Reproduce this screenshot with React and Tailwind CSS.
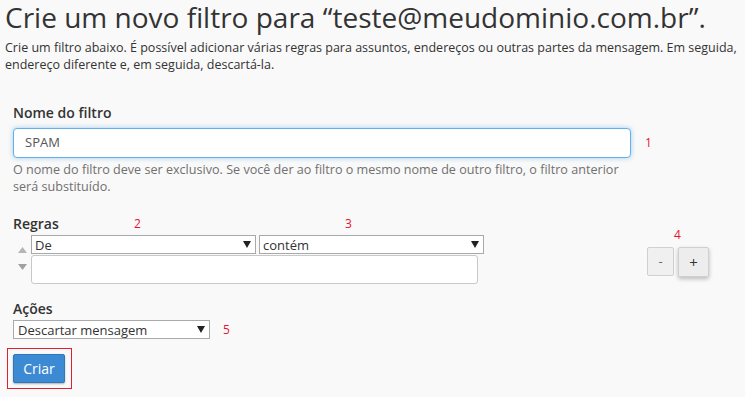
import React from 'react';

const Num = ({ children, className = '' }) => (
    <span className={`text-[12px] leading-none text-[#e8112d] ${className}`}>{children}</span>
);

const Select = ({ value, className = '' }) => (
    <div className={`flex items-center justify-between h-[19px] bg-white border border-[#a9a9a9] pl-[3px] pr-[4px] text-[13px] leading-[16px] text-[#333] ${className}`}>
        <span>{value}</span>
        <svg width="8" height="7" viewBox="0 0 8 7"><path d="M0 0 L8 0 L4 7 Z" fill="#222" /></svg>
    </div>
);

const App = () => {
    return (
        <div className="min-h-screen w-full overflow-hidden bg-[#f9f9f9] text-[#333] font-['Open_Sans',sans-serif]">
            <h1 className="pl-[5px] pt-[1px] text-[28px] leading-[32px] whitespace-nowrap">
                Crie um novo filtro para “teste@meudominio.com.br”.
            </h1>
            <div className="mt-[6px] pl-[5px] text-[12.5px] leading-[17px] whitespace-nowrap">
                <div>Crie um filtro abaixo. É possível adicionar várias regras para assuntos, endereços ou outras partes da mensagem. Em seguida,</div>
                <div>endereço diferente e, em seguida, descartá-la.</div>
            </div>

            <form className="pl-[13px] mt-[30px]" onSubmit={(e) => e.preventDefault()}>
                <div className="text-[14px] leading-[20px] font-semibold">Nome do filtro</div>
                <div className="mt-[5px] flex items-center">
                    <div className="w-[618px] h-[30px] flex items-center bg-white border border-[#66afe9] rounded-[4px] shadow-[0_0_5px_rgba(102,175,233,0.6)] px-[11px] text-[13px] text-[#555]">
                        SPAM
                    </div>
                    <Num className="ml-[14px]">1</Num>
                </div>
                <p className="w-[620px] mt-[3px] text-[12.6px] leading-[17px] text-[#707070]">
                    O nome do filtro deve ser exclusivo. Se você der ao filtro o mesmo nome de outro filtro, o filtro anterior será substituído.
                </p>

                <div className="mt-[19px] flex items-start">
                    <div>
                        <div className="flex items-end h-[20px]">
                            <span className="w-[121px] text-[14px] leading-[20px] font-semibold">Regras</span>
                            <Num className="w-[211px] pb-[4px]">2</Num>
                            <Num className="pb-[4px]">3</Num>
                        </div>
                        <div className="mt-[1px] flex">
                            <div className="w-[18px] flex flex-col items-center pt-[12px] gap-[11px]">
                                <svg width="9" height="6" viewBox="0 0 9 6"><path d="M4.5 0 L9 6 L0 6 Z" fill="#b5b5b5" /></svg>
                                <svg width="9" height="6" viewBox="0 0 9 6"><path d="M0 0 L9 0 L4.5 6 Z" fill="#a0a0a0" /></svg>
                            </div>
                            <div>
                                <div className="flex gap-[3px]">
                                    <Select value="De" className="w-[225px]" />
                                    <Select value="contém" className="w-[225px]" />
                                </div>
                                <div className="mt-[1px] w-[447px] h-[29px] bg-white border border-[#c8c8c8] rounded-[3px]" />
                            </div>
                        </div>
                    </div>
                    <div className="ml-[163px] pt-[15px] flex flex-col">
                        <Num className="self-start ml-[27px] h-[10px]">4</Num>
                        <div className="mt-[8px] flex items-start gap-[4px]">
                            <button type="button" className="w-[27px] h-[29px] bg-[#f0f0f0] border border-[#d0d0d0] rounded-[2px] text-[13px] text-[#666] leading-none">-</button>
                            <button type="button" className="w-[31px] h-[30px] bg-[#ededed] border border-[#d0d0d0] rounded-[2px] text-[15px] text-[#333] leading-none shadow-[0_2px_4px_rgba(0,0,0,0.25)]">+</button>
                        </div>
                    </div>
                </div>

                <div className="mt-[15px] text-[14px] leading-[20px] font-semibold">Ações</div>
                <div className="mt-[1px] flex items-center">
                    <Select value="Descartar mensagem" className="w-[197px] pl-[4px]" />
                    <Num className="ml-[13px]">5</Num>
                </div>

                <div className="mt-[9px] -ml-[6px] w-[65px] h-[41px] border border-[#e0202e] pl-[5px] pt-[5px]">
                    <button type="submit" className="w-[52px] h-[29px] bg-[#3b8ad3] border border-[#2f78bd] rounded-[2px] text-white text-[14px] shadow-[0_1px_2px_rgba(0,0,0,0.3)]">
                        Criar
                    </button>
                </div>
            </form>
        </div>
    );
};

export default App;
